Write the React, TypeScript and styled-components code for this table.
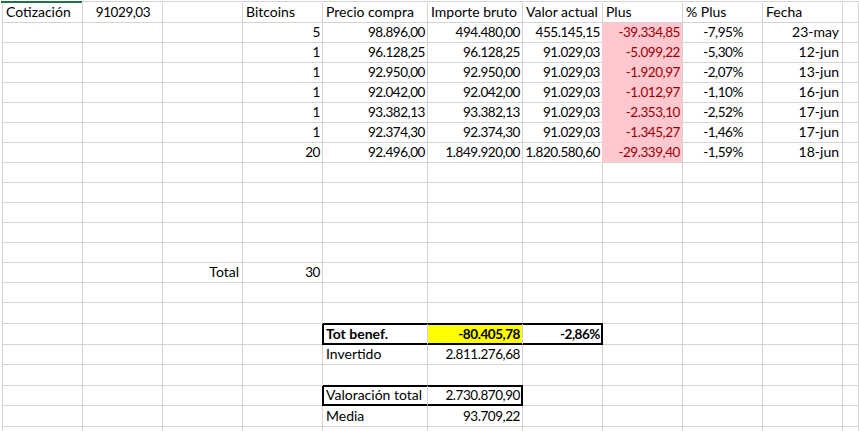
import React from "react";
import styled, { createGlobalStyle, css } from "styled-components";

const GlobalStyle = createGlobalStyle`
  html, body {
    margin: 0;
    padding: 0;
    background: #ffffff;
    overflow: hidden;
  }
  body {
    font-family: Lato, "Liberation Sans", sans-serif;
  }
`;

const COLS = "80px 80px 80px 80px 105px 95px 80px 80px 80px 80px 1fr";
const GRID = "#d4d4d4";
const INK = "#000000";

type Align = "l" | "c" | "r";
type Fill = "pink" | "yellow";

interface ICell {
  v: string;
  a?: Align;
  bold?: boolean;
  fill?: Fill;
  join?: boolean; // fill runs on into the row below
  box?: string; // edges of a thick frame: l t r b
}

interface IRow {
  h: number;
  cells: { [col: number]: ICell };
}

const Sheet = styled.div`
  width: 859px;
  height: 431px;
  overflow: hidden;
  padding-top: 1px;
  box-sizing: border-box;
`;

const EdgeBar = styled.div`
  display: grid;
  grid-template-columns: 81px 1fr;
  height: 2px;
  margin-left: 1px;
`;

const SelectedHead = styled.div`
  background: #217346;
`;

const HeadLine = styled.div`
  border-top: 1px solid ${GRID};
`;

const Grid = styled.div`
  margin-left: 2px;
  border-left: 1px solid ${GRID};
`;

const Row = styled.div<{ $h: number }>`
  display: grid;
  grid-template-columns: ${COLS};
  height: ${(p) => p.$h}px;
`;

const fills = {
  pink: css`
    background: #ffc7ce;
    color: #9c0006;
  `,
  yellow: css`
    background: #ffff00;
  `,
};

function frame(box?: string, fill?: Fill) {
  const s: string[] = [];
  if (fill === "pink") s.push("-1px 0 0 #ffc7ce");
  if (box) {
    if (box.includes("t")) s.push("inset 0 1px 0 #000", "0 -1px 0 #000");
    if (box.includes("b")) s.push("inset 0 -1px 0 #000");
    if (box.includes("l")) s.push("inset 1px 0 0 #000", "-1px 0 0 #000");
    if (box.includes("r")) s.push("inset -1px 0 0 #000");
  }
  return s.length ? s.join(", ") : "none";
}

const Cell = styled.div<{
  $a: Align;
  $bold: boolean;
  $num: boolean;
  $fill?: Fill;
  $join: boolean;
  $box?: string;
}>`
  box-sizing: border-box;
  display: flex;
  align-items: flex-end;
  justify-content: ${(p) =>
    p.$a === "r" ? "flex-end" : p.$a === "c" ? "center" : "flex-start"};
  padding: 0 ${(p) => (p.$num ? 2 : 3)}px 2px 3px;
  border-right: 1px solid ${GRID};
  border-bottom: 1px solid ${GRID};
  font-size: ${(p) => (p.$num ? "13.5px" : "14px")};
  line-height: 16px;
  letter-spacing: ${(p) => (p.$num ? "-0.45px" : "0")};
  font-weight: ${(p) => (p.$bold ? 700 : 400)};
  color: ${INK};
  white-space: nowrap;
  ${(p) => p.$fill && fills[p.$fill]}
  ${(p) => p.$join && p.$fill === "pink" && "border-bottom-color: #ffc7ce;"}
  ${(p) => p.$box?.includes("b") && "border-bottom-color: #000;"}
  ${(p) => p.$box?.includes("r") && "border-right-color: #000;"}
  box-shadow: ${(p) => frame(p.$box, p.$fill)};
`;

const purchases = [
  ["5", "98.896,00", "494.480,00", "455.145,15", "-39.334,85", "-7,95%", "23-may"],
  ["1", "96.128,25", "96.128,25", "91.029,03", "-5.099,22", "-5,30%", "12-jun"],
  ["1", "92.950,00", "92.950,00", "91.029,03", "-1.920,97", "-2,07%", "13-jun"],
  ["1", "92.042,00", "92.042,00", "91.029,03", "-1.012,97", "-1,10%", "16-jun"],
  ["1", "93.382,13", "93.382,13", "91.029,03", "-2.353,10", "-2,52%", "17-jun"],
  ["1", "92.374,30", "92.374,30", "91.029,03", "-1.345,27", "-1,46%", "17-jun"],
  ["20", "92.496,00", "1.849.920,00", "1.820.580,60", "-29.339,40", "-1,59%", "18-jun"],
];

const rows: IRow[] = [
  {
    h: 20,
    cells: {
      0: { v: "Cotización" },
      1: { v: "91029,03", a: "c" },
      3: { v: "Bitcoins" },
      4: { v: "Precio compra" },
      5: { v: "Importe bruto" },
      6: { v: "Valor actual" },
      7: { v: "Plus" },
      8: { v: "% Plus" },
      9: { v: "Fecha" },
    },
  },
  ...purchases.map((p, i) => ({
    h: 20,
    cells: {
      3: { v: p[0], a: "r" as Align },
      4: { v: p[1], a: "r" as Align },
      5: { v: p[2], a: "r" as Align },
      6: { v: p[3], a: "r" as Align },
      7: { v: p[4], a: "r" as Align, fill: "pink" as Fill, join: i < purchases.length - 1 },
      8: { v: p[5], a: "c" as Align },
      9: { v: p[6], a: "r" as Align },
    },
  })),
  { h: 20, cells: {} },
  { h: 20, cells: {} },
  { h: 20, cells: {} },
  { h: 20, cells: {} },
  { h: 20, cells: {} },
  { h: 20, cells: { 2: { v: "Total", a: "r" }, 3: { v: "30", a: "r" } } },
  { h: 20, cells: {} },
  { h: 21, cells: {} },
  {
    h: 21,
    cells: {
      4: { v: "Tot benef.", bold: true, box: "ltb" },
      5: { v: "-80.405,78", a: "r", bold: true, fill: "yellow", box: "tb" },
      6: { v: "-2,86%", a: "r", bold: true, box: "trb" },
    },
  },
  { h: 20, cells: { 4: { v: "Invertido" }, 5: { v: "2.811.276,68", a: "r" } } },
  { h: 21, cells: {} },
  {
    h: 20,
    cells: {
      4: { v: "Valoración total", box: "ltb" },
      5: { v: "2.730.870,90", a: "r", box: "trb" },
    },
  },
  { h: 21, cells: { 4: { v: "Media" }, 5: { v: "93.709,22", a: "r" } } },
  { h: 20, cells: {} },
];

const COLUMN_COUNT = 11;
const isNumber = (v?: string) => !!v && /^[-\d.,%]+$/.test(v);

export default function App() {
  return (
    <>
      <GlobalStyle />
      <Sheet>
        <EdgeBar>
          <SelectedHead />
          <HeadLine />
        </EdgeBar>
        <Grid>
          {rows.map((row, r) => (
            <Row key={r} $h={row.h}>
              {Array.from({ length: COLUMN_COUNT }, (_, c) => {
                const cell = row.cells[c];
                return (
                  <Cell
                    key={c}
                    $a={cell?.a ?? "l"}
                    $bold={!!cell?.bold}
                    $num={isNumber(cell?.v)}
                    $fill={cell?.fill}
                    $join={!!cell?.join}
                    $box={cell?.box}
                  >
                    {cell?.v}
                  </Cell>
                );
              })}
            </Row>
          ))}
        </Grid>
      </Sheet>
    </>
  );
}
